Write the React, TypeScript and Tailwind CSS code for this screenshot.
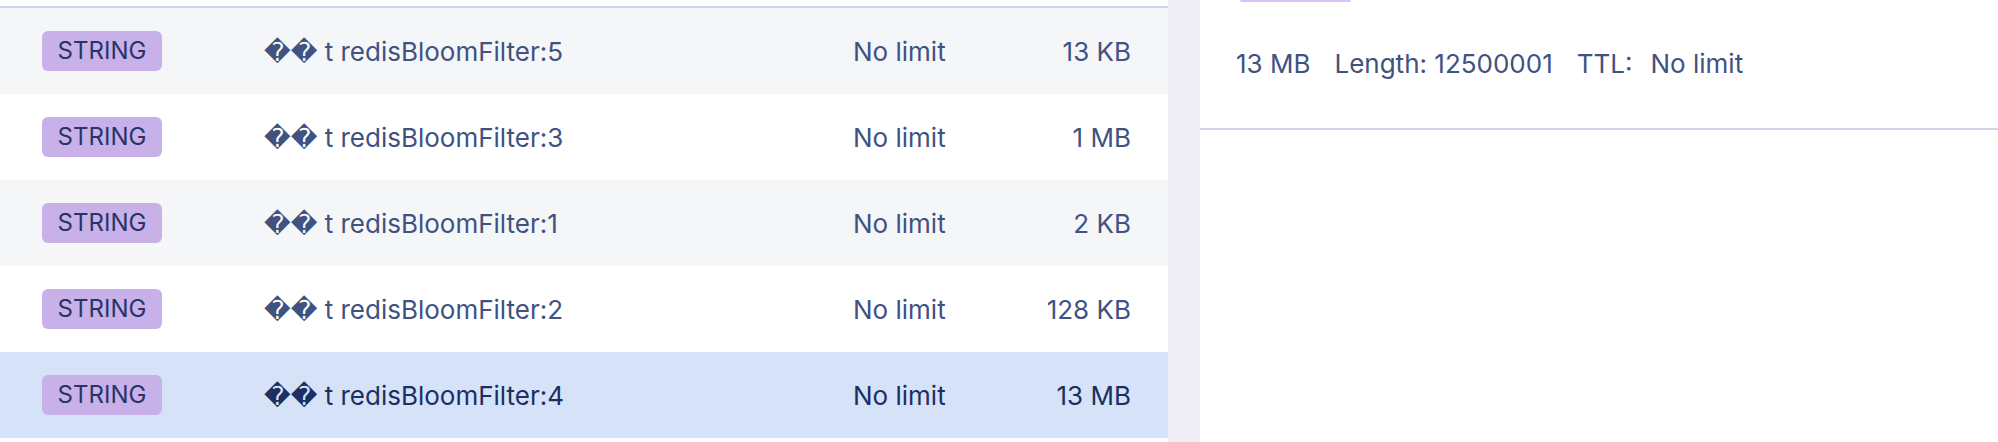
const ROWS = [
  { name: "redisBloomFilter:5", ttl: "No limit", size: "13 KB" },
  { name: "redisBloomFilter:3", ttl: "No limit", size: "1 MB" },
  { name: "redisBloomFilter:1", ttl: "No limit", size: "2 KB" },
  { name: "redisBloomFilter:2", ttl: "No limit", size: "128 KB" },
  { name: "redisBloomFilter:4", ttl: "No limit", size: "13 MB" },
];

const SELECTED = 4;

function Row({ row, index }: { row: (typeof ROWS)[number]; index: number }) {
  const selected = index === SELECTED;
  const bg = selected ? "bg-[#d6e2f8]" : index % 2 === 0 ? "bg-[#f5f6f8]" : "bg-white";
  const text = selected ? "text-[#1c2f62]" : "text-[#3f5281]";
  return (
    <div className={`flex h-[86px] items-center whitespace-nowrap ${bg} ${text}`}>
      <div className="w-[264px] shrink-0 pl-[42px]">
        <span className="flex h-[40px] w-[120px] items-center justify-center rounded-[6px] bg-[#c8b1e8] text-[24px] text-[#27346a]">
          STRING
        </span>
      </div>
      <div className="w-[589px] shrink-0">{"\uFFFD\uFFFD"} t {row.name}</div>
      <div className="w-[140px] shrink-0">{row.ttl}</div>
      <div className="flex-1 pr-[37px] text-right">{row.size}</div>
    </div>
  );
}

export default function App() {
  return (
    <div
      className="flex h-[442px] w-[1998px] overflow-hidden bg-white text-[26px]"
      style={{ fontFamily: "Inter, 'DejaVu Sans', sans-serif" }}
    >
      <div className="flex w-[1168px] shrink-0 flex-col bg-white">
        <div className="h-[6px] bg-white" />
        <div className="h-[2px] bg-[#ccd6e6]" />
        {ROWS.map((row, i) => (
          <Row key={row.name} row={row} index={i} />
        ))}
      </div>
      <div className="w-[32px] shrink-0 bg-[#eeeef4]" />
      <div className="flex flex-1 flex-col bg-white text-[#3f5281]">
        <div className="ml-[40px] h-[2px] w-[111px] rounded-b-[2px] bg-[#d9c3f6]" />
        <div className="flex h-[126px] items-center gap-[24px] pl-[36px] pb-[4px] whitespace-nowrap">
          <span>13 MB</span>
          <span>Length: 12500001</span>
          <span className="flex gap-[18px]">
            <span>TTL:</span>
            <span>No limit</span>
          </span>
        </div>
        <div className="h-[2px] bg-[#ccd6e6]" />
      </div>
    </div>
  );
}
